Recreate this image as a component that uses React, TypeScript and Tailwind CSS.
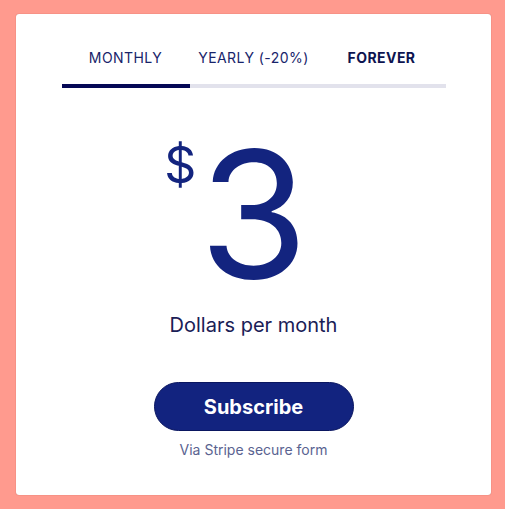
import React, { useState } from 'react';

const tabs = ['MONTHLY', 'YEARLY (-20%)', 'FOREVER'];

const App: React.FC = () => {
  const [active] = useState(0);

  return (
    <div className="min-h-screen w-full bg-[#ff9a8e] pl-4 pt-[14px] font-['Inter',sans-serif]">
      <div className="w-[475px] h-[481px] bg-white rounded-[3px] shadow-[0_0_1px_rgba(120,40,30,0.6)] flex flex-col items-center">
        {/* Tabs */}
        <div className="mt-[34px] w-[384px] grid grid-cols-3">
          {tabs.map((t, i) => (
            <div key={t} className="flex flex-col items-center">
              <span
                className={`text-[14px] leading-[20px] tracking-[0.45px] ${
                  i === 2 ? 'font-bold text-[#0d1450]' : 'text-[#18246a]'
                }`}
              >
                {t}
              </span>
              <div
                className={`mt-[16px] h-[4px] w-full ${
                  i === active ? 'bg-[#050855]' : 'bg-[#e2e2ec]'
                }`}
              />
            </div>
          ))}
        </div>

        {/* Price */}
        <div className="relative mt-[38px]">
          <span className="absolute left-[-35px] top-[14px] text-[50px] leading-none text-[#13247f]">$</span>
          <span className="block text-[176px] leading-none text-[#13247f]">3</span>
        </div>

        <p className="mt-[11px] text-[20px] leading-[24px] text-[#1a2056]">Dollars per month</p>

        {/* Subscribe */}
        <button
          type="button"
          className="mt-[45px] w-[200px] h-[49px] rounded-full bg-[#12237f] border border-[#0a1660] text-white text-[20px] font-bold"
        >
          Subscribe
        </button>
        <p className="mt-[9px] text-[14px] leading-[20px] text-[#5a6391]">Via Stripe secure form</p>
      </div>
    </div>
  );
};

export default App;
